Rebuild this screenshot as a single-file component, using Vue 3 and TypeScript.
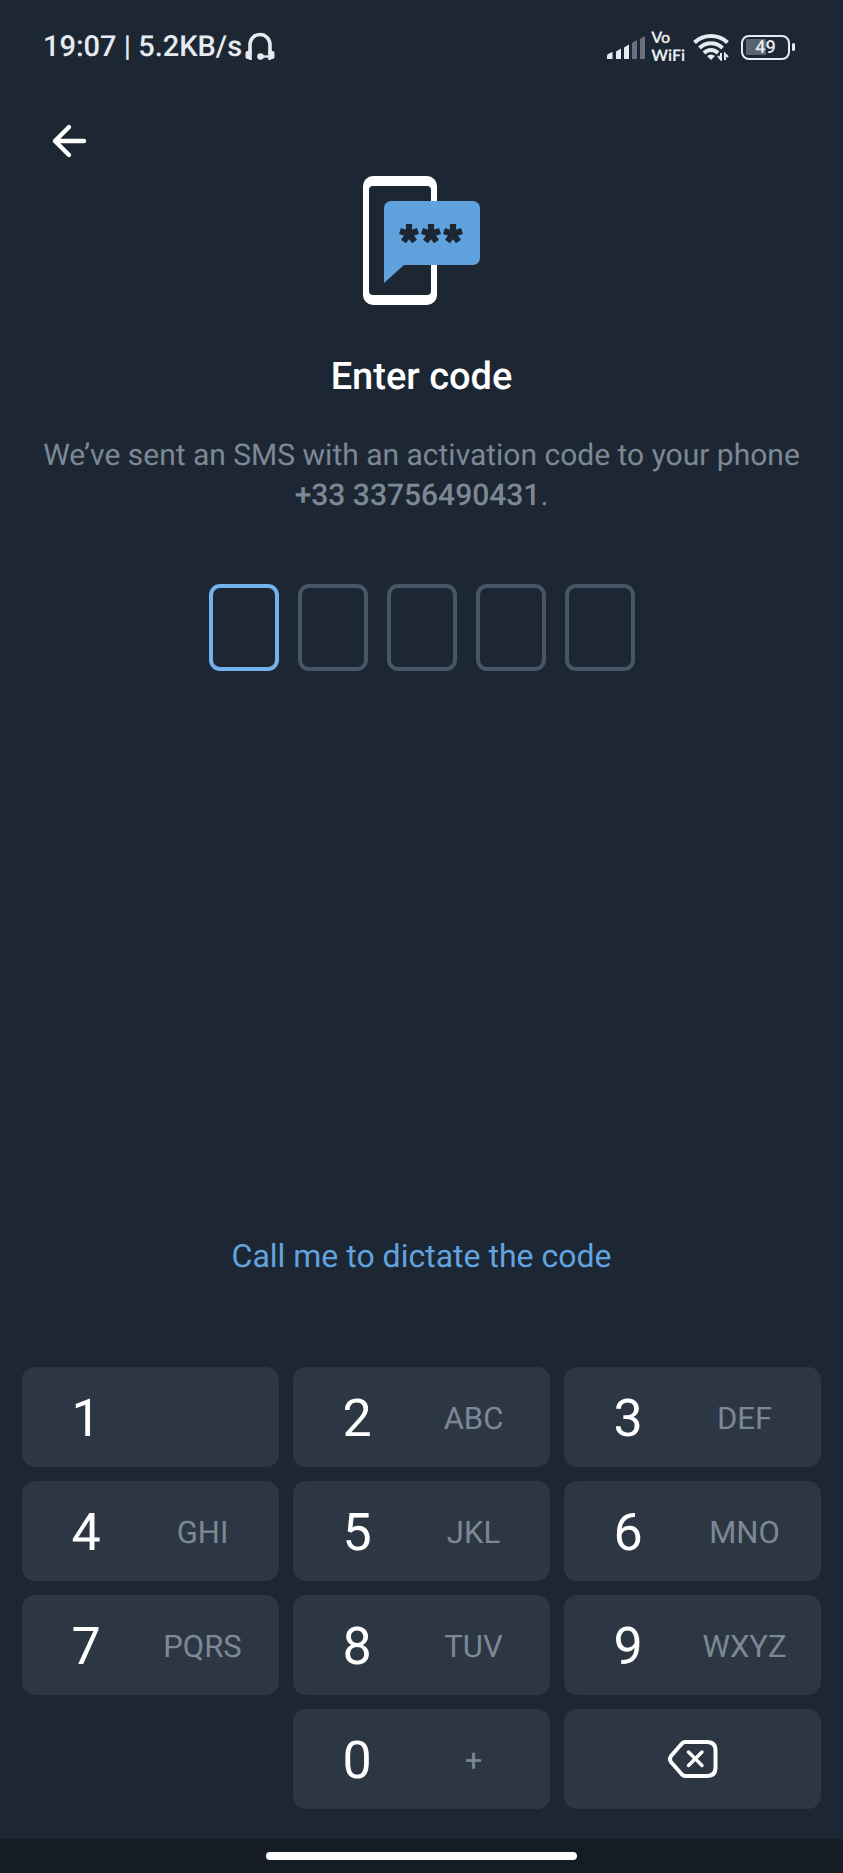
<script setup lang="ts">
import { ref } from 'vue'

interface Key {
  digit: string
  letters: string
}

const keys: Key[] = [
  { digit: '1', letters: '' },
  { digit: '2', letters: 'ABC' },
  { digit: '3', letters: 'DEF' },
  { digit: '4', letters: 'GHI' },
  { digit: '5', letters: 'JKL' },
  { digit: '6', letters: 'MNO' },
  { digit: '7', letters: 'PQRS' },
  { digit: '8', letters: 'TUV' },
  { digit: '9', letters: 'WXYZ' },
  { digit: '0', letters: '+' },
]

const codeLength = 5
const code = ref<string[]>([])

function press(digit: string): void {
  if (code.value.length < codeLength) code.value.push(digit)
}

function erase(): void {
  code.value.pop()
}
</script>

<template>
  <div class="screen">
    <header class="status">
      <div class="status-group">
        <span class="clock">19:07 | 5.2KB/s</span>
        <svg class="headphones" width="30" height="30" viewBox="0 0 30 30" aria-hidden="true">
          <path d="M5 22V12.500a10 10 0 0 1 20 0V22" fill="none" stroke="currentColor" stroke-width="3.600" />
          <path d="M6.800 18.500v9.500H4.500L3.500 27H2.500Q.5 27 .5 25V21Q.5 19 2.500 19H3.500V18.500zM23.200 18.500v9.500h2.300L26.500 27h1Q29.500 27 29.500 25V21Q29.500 19 27.500 19H26.500V18.500z" fill="currentColor" />
          <path d="M16 24.500h9" stroke="currentColor" stroke-width="2.400" />
          <circle cx="15.500" cy="24.500" r="3.300" fill="currentColor" />
        </svg>
      </div>
      <div class="status-group">
        <svg width="38" height="26" viewBox="0 0 38 26" aria-hidden="true">
          <path d="M0 22q0-2 2-2.500l3.500-1.500v7H0zM9 17.500l5-3V25H9zM17 13.500l5-3V25h-5z" fill="currentColor" />
          <path d="M25 9l5-3v19h-5zM33 5l5-3v23h-5z" fill="#68717d" />
        </svg>
        <span class="vowifi"><span>Vo</span><span>WiFi</span></span>
        <svg class="wifi" width="36" height="28" viewBox="0 0 36 28" aria-hidden="true">
          <g fill="none" stroke="currentColor" stroke-width="4">
            <path d="M1.500 9.500Q8.500 3 18 3t16.500 6.500" />
            <path d="M6.500 15Q11.500 10.300 18 10.300T29.500 15" />
            <path d="M11 20Q14 17 18 17t7 3" />
          </g>
          <path d="M14 23q4-3 8 0l-4 4z" fill="currentColor" />
          <path d="M25 23l3 3.500V20M32 27v-6l3 3" fill="none" stroke="currentColor" stroke-width="2" />
        </svg>
        <span class="battery"><span class="battery-body">49</span><span class="battery-tip"></span></span>
      </div>
    </header>

    <nav class="toolbar">
      <button type="button" class="back" aria-label="Back">
        <svg width="36" height="36" viewBox="0 0 36 36" aria-hidden="true">
          <path d="M33 18H4M18 4L4 18l14 14" fill="none" stroke="currentColor" stroke-width="4.400" stroke-linecap="round" stroke-linejoin="round" />
        </svg>
      </button>
    </nav>

    <main class="content">
      <svg class="art" width="118" height="130" viewBox="0 0 118 130" aria-hidden="true">
        <path fill="#fff" fill-rule="evenodd" d="M10 0h54a10 10 0 0 1 10 10v109a10 10 0 0 1-10 10H10a10 10 0 0 1-10-10V10A10 10 0 0 1 10 0zM10 10a4 4 0 0 0-4 4v101a4 4 0 0 0 4 4h54a4 4 0 0 0 4-4V14a4 4 0 0 0-4-4z" />
        <path fill="#5fa2de" d="M28 25h82a7 7 0 0 1 7 7v50a7 7 0 0 1-7 7H41L21 107V32a7 7 0 0 1 7-7z" />
        <g stroke="#1d2733" stroke-width="6.200">
          <path v-for="x in [46, 68, 90]" :key="x" :d="`M${x} 58V48M${x} 58l9-3M${x} 58l5.500 7.500M${x} 58l-5.500 7.500M${x} 58l-9-3`" />
        </g>
      </svg>
      <h1 class="title">Enter code</h1>
      <p class="message">
        We’ve sent an SMS with an activation code to your phone
        <strong>+33 33756490431</strong>.
      </p>
      <div class="code">
        <input
          v-for="n in codeLength"
          :key="n"
          class="cell"
          :class="{ active: n === code.length + 1 }"
          type="text"
          inputmode="none"
          maxlength="1"
          readonly
          :value="code[n - 1] ?? ''"
          :aria-label="`Digit ${n}`"
        />
      </div>
    </main>

    <button type="button" class="call">Call me to dictate the code</button>

    <section class="keypad" aria-label="Keypad">
      <button
        v-for="key in keys"
        :key="key.digit"
        type="button"
        class="key"
        :class="{ zero: key.digit === '0' }"
        @click="press(key.digit)"
      >
        <span class="digit">{{ key.digit }}</span>
        <span class="letters">{{ key.letters }}</span>
      </button>
      <button type="button" class="key erase" aria-label="Delete" @click="erase">
        <svg width="50" height="40" viewBox="0 0 50 40" aria-hidden="true">
          <path d="M17 3h22q8.500 0 8.500 8.500v17q0 8.500-8.500 8.500H17q-1.500 0-3-1.500L3 23q-2-3 0-6L14 4.500Q15.500 3 17 3z" fill="none" stroke="currentColor" stroke-width="4" stroke-linejoin="round" />
          <path d="M20.500 13l13.500 13.500M34 13L20.500 26.500" stroke="currentColor" stroke-width="3.400" stroke-linecap="round" />
        </svg>
      </button>
    </section>

    <footer class="gesture"><span class="handle"></span></footer>
  </div>
</template>

<style>
body {
  margin: 0;
  background: #1d2733;
}
</style>

<style scoped>
.screen {
  display: flex;
  flex-direction: column;
  min-height: 100vh;
  background: #1d2733;
  color: #fff;
  font-family: Roboto, "Liberation Sans", sans-serif;
  text-rendering: geometricPrecision;
}
button {
  padding: 0;
  border: 0;
  background: none;
  color: inherit;
  font: inherit;
  text-rendering: inherit;
  cursor: pointer;
}
svg {
  display: block;
  flex: none;
}
.status {
  display: flex;
  justify-content: space-between;
  align-items: center;
  height: 94px;
  padding: 0 48px 0 43px;
  color: #e6eaf1;
}
.status-group {
  display: flex;
  align-items: center;
}
.clock {
  font-size: 29px;
  font-weight: 500;
  line-height: 32px;
}
.headphones {
  margin-left: 3px;
}
.vowifi {
  display: flex;
  flex-direction: column;
  margin-left: 6px;
  font-family: Lato, sans-serif;
  font-size: 16px;
  font-weight: 700;
  line-height: 18px;
}
.wifi {
  margin: 0 12px 0 8px;
}
.battery {
  display: flex;
  align-items: center;
  gap: 2px;
}
.battery-body {
  box-sizing: border-box;
  width: 49px;
  height: 25px;
  border: 2px solid #e6eaf1;
  border-radius: 8px;
  background: linear-gradient(90deg, #59626f 50%, transparent 50%) center / 40px 16px no-repeat;
  font-size: 18px;
  font-weight: 500;
  line-height: 21px;
  text-align: center;
}
.battery-tip {
  width: 3px;
  height: 8px;
  border-radius: 2px;
  background: #e6eaf1;
}
.toolbar {
  height: 82px;
  padding: 0 51px;
}
.back {
  display: block;
  padding-top: 29px;
}
.content {
  display: flex;
  flex-direction: column;
  align-items: center;
}
.title {
  margin: 48px 0 0;
  font-size: 38px;
  font-weight: 500;
  line-height: 46px;
}
.message {
  margin: 36px 40px 0;
  max-width: 760px;
  color: #7c8896;
  font-size: 30px;
  line-height: 40px;
  text-align: center;
}
.message strong {
  font-weight: 500;
}
.code {
  display: flex;
  gap: 19px;
  margin-top: 68px;
}
.cell {
  box-sizing: border-box;
  width: 70px;
  height: 87px;
  padding: 0;
  border: 4px solid #475666;
  border-radius: 11px;
  outline: none;
  background: transparent;
  color: #fff;
  font: 400 38px Roboto, sans-serif;
  text-align: center;
}
.cell.active {
  border-color: #73b1ee;
}
.call {
  align-self: center;
  margin-top: auto;
  margin-bottom: 89px;
  color: #62a3df;
  font-size: 32px;
  line-height: 44px;
}
.keypad {
  display: grid;
  grid-template-columns: repeat(3, 1fr);
  gap: 14px;
  padding: 0 22px 30px;
}
.key {
  display: flex;
  align-items: center;
  height: 100px;
  padding: 3px 0 0 24px;
  border-radius: 13px;
  background: #2d3743;
}
.zero {
  grid-column: 2;
}
.digit {
  width: 80px;
  font-size: 52px;
  line-height: 60px;
  text-align: center;
}
.letters {
  flex: 1;
  color: #7c8896;
  font-size: 31px;
  line-height: 36px;
  text-align: center;
}
.erase {
  justify-content: center;
  padding: 0;
}
.gesture {
  display: flex;
  justify-content: center;
  align-items: center;
  height: 34px;
  background: #151c26;
}
.handle {
  width: 37%;
  height: 8px;
  border-radius: 4px;
  background: #fff;
}
</style>
